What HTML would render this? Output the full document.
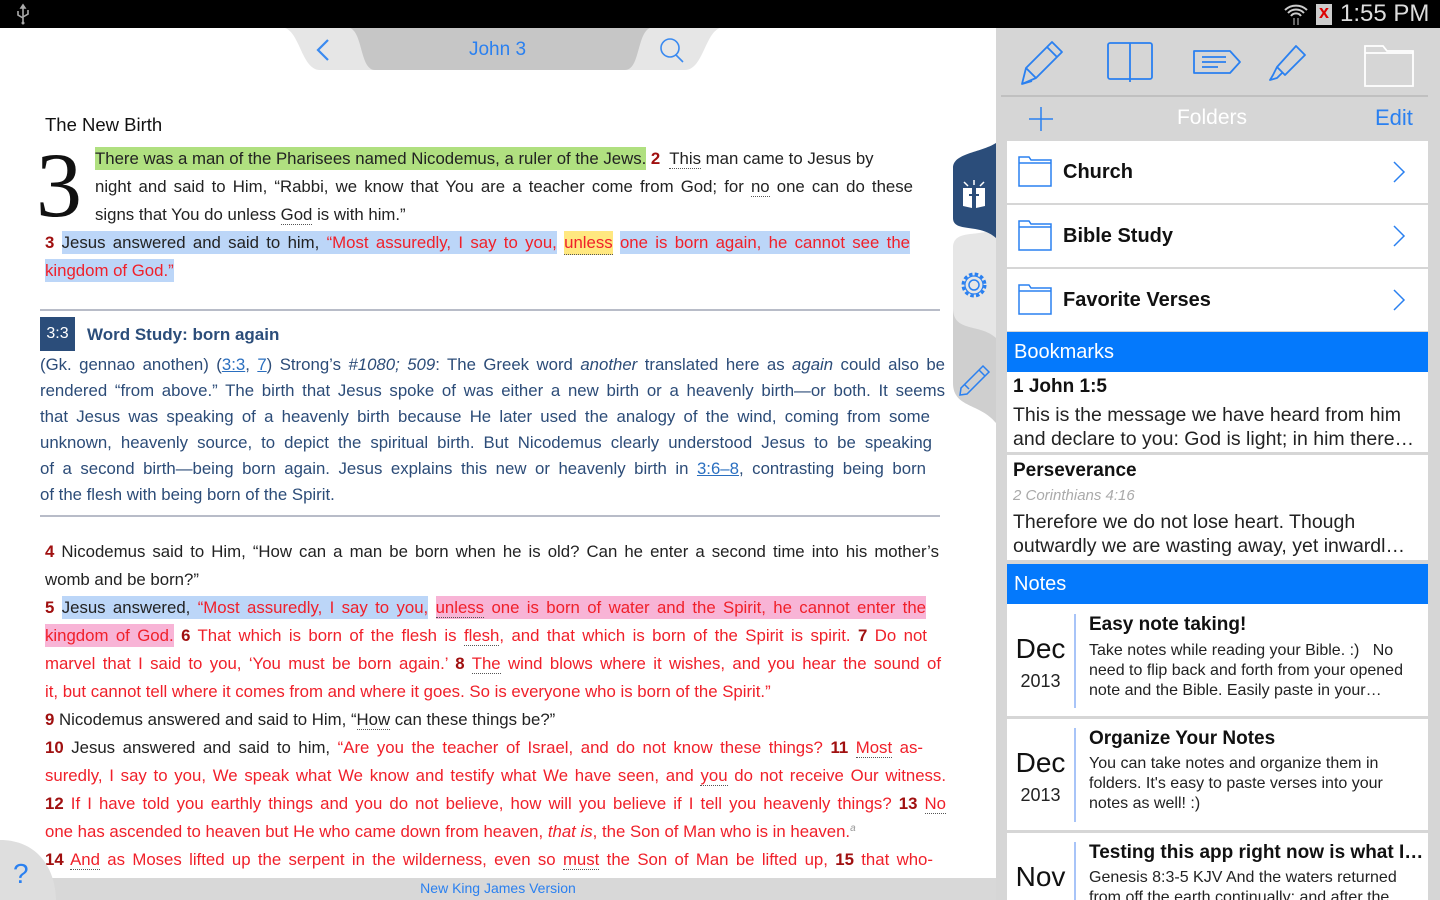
<!DOCTYPE html>
<html style="overflow:hidden"><head><meta charset="utf-8">
<style>
*{margin:0;padding:0;box-sizing:border-box}
html,body{width:1440px;height:900px;overflow:hidden}
body{background:#fff;font-family:"Liberation Sans",sans-serif;position:relative}
.a{position:absolute}
.l{position:absolute;white-space:nowrap;font-size:16.8px;line-height:20px;color:#222}
.j{text-align:justify;text-align-last:justify}
.r{color:#f0202a}
.n{color:#a01010;font-weight:bold}
.hg{background:#b0e080;padding:2px 0}
.hb{background:#bcd6f8;padding:2px 0}
.hy{background:#ffe880;padding:2px 0}
.hp{background:#f8b4d6;padding:2px 0}
.u{border-bottom:1px dotted #555}
.s{color:#2c4c78;font-size:16.8px}
.lk{color:#2a6fc0;text-decoration:underline}
.row{position:absolute;left:1007px;width:421px;background:#fff}
</style></head><body>
<!-- status bar -->
<div class="a" style="left:0;top:0;width:1440px;height:28px;background:#000"></div>
<svg class="a" style="left:12px;top:3px" width="22" height="22" viewBox="0 0 22 22"><path d="M11 2v18M11 2l-2 3h4zM6 8v4l5 3M16 7v4l-5 3" stroke="#aaa" stroke-width="1.6" fill="none"/><circle cx="11" cy="20" r="1.5" fill="#aaa"/></svg>
<svg class="a" style="left:1283px;top:2px" width="26" height="24" viewBox="0 0 26 24"><path d="M2 8a16 16 0 0 1 22 0M5 11a11 11 0 0 1 16 0M8 14a6 6 0 0 1 10 0" stroke="#ccc" stroke-width="2" fill="none"/><path d="M11 16v7M15 16v7" stroke="#888" stroke-width="1.5"/></svg>
<div class="a" style="left:1316px;top:4px;width:16px;height:21px;background:#ccc"></div>
<div class="a" style="left:1316px;top:2px;color:#d00;font-size:18px;font-weight:bold;width:16px;text-align:center">x</div>
<div class="a" style="left:1340px;top:0;color:#ddd;font-size:24px;line-height:28px">1:55 PM</div>

<!-- header tab -->
<svg class="a" style="left:285px;top:28px" width="435" height="44" viewBox="0 0 435 44"><path d="M0 0H435C420 5 418 42 400 42H35C17 42 15 5 0 0Z" fill="#e6e6e6"/><path d="M65 0H365C352 5 355 42 340 42H90C75 42 78 5 65 0Z" fill="#c6c6c6"/><path d="M43 12L33 22L43 32" stroke="#3a8af0" stroke-width="2.2" fill="none"/><circle cx="385" cy="20" r="9" stroke="#3a8af0" stroke-width="1.6" fill="none"/><path d="M391 27l7 7" stroke="#3a8af0" stroke-width="1.6"/></svg>
<div class="a" style="left:430px;top:39px;width:135px;text-align:center;color:#2a80f0;font-size:19px">John 3</div>

<!-- text -->
<div class="a" style="left:45px;top:114px;font-size:18.5px;color:#111">The New Birth</div>
<div class="a" style="left:36px;top:130px;font-family:'Liberation Serif',serif;font-size:92px;line-height:110px;color:#111">3</div>
<div class="l" style="left:95px;top:149px;width:830px"><span class="hg">There was a man of the Pharisees named Nicodemus, a ruler of the Jews.</span> <span class="n">2</span>&nbsp; <span class="u">This</span> man came to Jesus by</div>
<div class="l j" style="left:95px;top:177px;width:818px">night and said to Him, “Rabbi, we know that You are a teacher come from God; for <span class="u">no</span> one can do these</div>
<div class="l" style="left:95px;top:205px">signs that You do unless <span class="u">God</span> is with him.”</div>
<div class="l j" style="left:45px;top:233px;width:865px"><span class="n">3</span> <span class="hb">Jesus answered and said to him, <span class="r">“Most assuredly, I say to you,</span></span> <span class="hy r u">unless</span> <span class="hb r">one is born again, he cannot see the</span></div>
<div class="l r" style="left:45px;top:261px"><span class="hb">kingdom of God.”</span></div>

<div class="a" style="left:40px;top:309px;width:900px;height:2px;background:#b8bcc8"></div>
<div class="a" style="left:40px;top:317px;width:35px;height:34px;background:#2b4d7a;color:#fff;font-size:16px;line-height:34px;text-align:center">3:3</div>
<div class="a" style="left:87px;top:325px;font-size:17px;font-weight:bold;color:#2b4d7a">Word Study: born again</div>
<div class="l j s" style="left:40px;top:355px;width:905px">(Gk. gennao anothen) (<span class="lk">3:3</span>, <span class="lk">7</span>) Strong’s <i>#1080; 509</i>: The Greek word <i>another</i> translated here as <i>again</i> could also be</div>
<div class="l j s" style="left:40px;top:381px;width:905px">rendered “from above.” The birth that Jesus spoke of was either a new birth or a heavenly birth—or both. It seems</div>
<div class="l j s" style="left:40px;top:407px;width:890px">that Jesus was speaking of a heavenly birth because He later used the analogy of the wind, coming from some</div>
<div class="l j s" style="left:40px;top:433px;width:892px">unknown, heavenly source, to depict the spiritual birth. But Nicodemus clearly understood Jesus to be speaking</div>
<div class="l j s" style="left:40px;top:459px;width:886px">of a second birth—being born again. Jesus explains this new or heavenly birth in <span class="lk">3:6–8</span>, contrasting being born</div>
<div class="l s" style="left:40px;top:485px">of the flesh with being born of the Spirit.</div>
<div class="a" style="left:40px;top:515px;width:900px;height:2px;background:#b8bcc8"></div>

<div class="l j" style="left:45px;top:542px;width:894px"><span class="n">4</span> Nicodemus said to Him, “How can a man be born when he is old? Can he enter a second time into his mother’s</div>
<div class="l" style="left:45px;top:570px">womb and be born?”</div>
<div class="l j" style="left:45px;top:598px;width:881px"><span class="n">5</span> <span class="hb">Jesus answered, <span class="r">“Most assuredly, I say to you,</span></span> <span class="hp r"><span class="u">unless</span> one is born of water and the Spirit, he cannot enter the</span></div>
<div class="l j r" style="left:45px;top:626px;width:882px"><span class="hp">kingdom of God.</span> <span class="n">6</span> That which is born of the flesh is <span class="u">flesh</span>, and that which is born of the Spirit is spirit. <span class="n">7</span> Do not</div>
<div class="l j r" style="left:45px;top:654px;width:896px">marvel that I said to you, ‘You must be born again.’ <span class="n">8</span> <span class="u">The</span> wind blows where it wishes, and you hear the sound of</div>
<div class="l r" style="left:45px;top:682px">it, but cannot tell where it comes from and where it goes. So is everyone who is born of the Spirit.”</div>
<div class="l" style="left:45px;top:710px"><span class="n">9</span> Nicodemus answered and said to Him, “<span class="u">How</span> can these things be?”</div>
<div class="l j" style="left:45px;top:738px;width:878px"><span class="n">10</span> Jesus answered and said to him, <span class="r">“Are you the teacher of Israel, and do not know these things?</span> <span class="n">11</span> <span class="r"><span class="u">Most</span> as-</span></div>
<div class="l j r" style="left:45px;top:766px;width:901px">suredly, I say to you, We speak what We know and testify what We have seen, and <span class="u">you</span> do not receive Our witness.</div>
<div class="l j r" style="left:45px;top:794px;width:901px"><span class="n">12</span> If I have told you earthly things and you do not believe, how will you believe if I tell you heavenly things? <span class="n">13</span> <span class="u">No</span></div>
<div class="l r" style="left:45px;top:822px">one has ascended to heaven but He who came down from heaven, <i>that is</i>, the Son of Man who is in heaven.<span style="color:#999;font-size:10px;position:relative;top:-6px"><i>a</i></span></div>
<div class="l j r" style="left:45px;top:850px;width:888px"><span class="n">14</span> <span class="u">And</span> as Moses lifted up the serpent in the wilderness, even so <span class="u">must</span> the Son of Man be lifted up, <span class="n">15</span> that who-</div>

<div class="a" style="left:0;top:878px;width:996px;height:22px;background:#d8d8d8"></div>
<div class="a" style="left:0;top:880px;width:996px;text-align:center;color:#2a80f0;font-size:14px">New King James Version</div>
<svg class="a" style="left:0;top:840px" width="60" height="60"><path d="M0 0C35 0 55 25 56 60H0Z" fill="#dedede"/></svg>
<div class="a" style="left:13px;top:858px;color:#2a80f0;font-size:28px">?</div>

<!-- side tabs -->
<svg class="a" style="left:950px;top:138px" width="48" height="300" viewBox="0 0 48 300"><path d="M46 100C30 110 5 100 3 125V245C3 270 30 265 46 285Z" fill="#cfcfcf"/><path d="M46 0V200C30 185 3 195 3 170V110C3 90 30 100 46 90Z" fill="#e6e6e6"/><path d="M46 5V100C30 85 3 95 3 80V30C3 15 30 15 46 5Z" fill="#2b4d7a"/>
<g fill="#fff"><path d="M13 50h9v20l-9-2zM26 50h9v18l-9 2z"/></g><path d="M24 52v18M19 57h10" stroke="#2b4d7a" stroke-width="2"/>
<path d="M14 44l4 4M34 44l-4 4M24 42v5" stroke="#fff" stroke-width="1.5"/>
<circle cx="24" cy="147" r="5" stroke="#2a80f0" stroke-width="1.5" fill="none"/><circle cx="24" cy="147" r="11" stroke="#2a80f0" stroke-width="3" stroke-dasharray="3.5 2.3" fill="none"/><circle cx="24" cy="147" r="9" stroke="#2a80f0" stroke-width="1.2" fill="none"/>
<path d="M11 250l22-22 6 6-22 22-7 1zM29 232l6 6M14 246l5 5" stroke="#2a80f0" stroke-width="1.5" fill="none"/></svg>

<!-- right panel -->
<div class="a" style="left:996px;top:28px;width:444px;height:872px;background:#d6d6d6"></div>
<svg class="a" style="left:1000px;top:36px" width="440" height="56" viewBox="0 0 440 56"><g stroke="#2a80f0" stroke-width="1.8" fill="none" stroke-linejoin="round">
<path d="M22 48l4-16 26-26 10 10-26 26zM47 11l10 10M26 32l10 10M22 48l10-3"/>
<rect x="108" y="7" width="44" height="36" rx="2"/><path d="M130 7v39"/>
<path d="M194 15h36l10 11-10 11h-36zM202 21h24M202 26h24M202 31h16"/>
<path d="M296 10l9 9-20 20-8-8zM277 31l-4 8-3 5 7-2 6-6"/></g>
<path d="M365 10h18l4 5h26v35h-48z M365 17h48" stroke="#fff" stroke-width="1.8" fill="none"/></svg>
<div class="a" style="left:1001px;top:95px;width:427px;height:2px;background:#c0c0c0"></div>
<svg class="a" style="left:1028px;top:106px" width="26" height="26"><path d="M13 1v24M1 13h24" stroke="#2a80f0" stroke-width="1.5"/></svg>
<div class="a" style="left:1100px;top:106px;width:224px;text-align:center;color:#fff;font-size:21px">Folders</div>
<div class="a" style="left:1375px;top:105px;color:#2a80f0;font-size:22px">Edit</div>

<div class="row" style="top:141px;height:62px"></div>
<div class="row" style="top:205px;height:62px"></div>
<div class="row" style="top:269px;height:62px"></div>
<svg class="a" style="left:1015px;top:141px" width="400" height="190"><g stroke="#2a80f0" stroke-width="1.5" fill="none">
<path d="M4 16h10l2 3h20v26h-32z M4 22h32"/><path d="M4 80h10l2 3h20v26h-32z M4 86h32"/><path d="M4 144h10l2 3h20v26h-32z M4 150h32"/>
<path d="M379 21l10 10-10 10M379 85l10 10-10 10M379 149l10 10-10 10"/></g></svg>
<div class="a" style="left:1063px;top:161px;font-size:20px;font-weight:bold;color:#111">Church</div>
<div class="a" style="left:1063px;top:225px;font-size:20px;font-weight:bold;color:#111">Bible Study</div>
<div class="a" style="left:1063px;top:289px;font-size:20px;font-weight:bold;color:#111">Favorite Verses</div>

<div class="a" style="left:1007px;top:332px;width:421px;height:40px;background:#0479fc;color:#fff;font-size:20px;line-height:40px;padding-left:7px">Bookmarks</div>
<div class="row" style="top:372px;height:80px"></div>
<div class="a" style="left:1013px;top:376px;font-size:19px;font-weight:bold;color:#111">1 John 1:5</div>
<div class="a" style="left:1013px;top:403px;font-size:19.5px;color:#222;line-height:24px;white-space:nowrap">This is the message we have heard from him<br>and declare to you: God is light; in him there…</div>
<div class="row" style="top:455px;height:105px"></div>
<div class="a" style="left:1013px;top:460px;font-size:19px;font-weight:bold;color:#111">Perseverance</div>
<div class="a" style="left:1013px;top:487px;font-size:15px;font-style:italic;color:#aaa">2 Corinthians 4:16</div>
<div class="a" style="left:1013px;top:510px;font-size:19.5px;color:#222;line-height:24px;white-space:nowrap">Therefore we do not lose heart. Though<br>outwardly we are wasting away, yet inwardl…</div>

<div class="a" style="left:1007px;top:564px;width:421px;height:40px;background:#0479fc;color:#fff;font-size:20px;line-height:40px;padding-left:7px">Notes</div>
<div class="row" style="top:604px;height:112px"></div>
<div class="row" style="top:719px;height:111px"></div>
<div class="row" style="top:833px;height:67px"></div>
<div class="a" style="left:1074px;top:614px;width:2px;height:94px;background:#a8c4f8"></div>
<div class="a" style="left:1074px;top:728px;width:2px;height:94px;background:#a8c4f8"></div>
<div class="a" style="left:1074px;top:842px;width:2px;height:58px;background:#a8c4f8"></div>
<div class="a" style="left:1007px;top:633px;width:67px;text-align:center;font-size:28px;color:#111">Dec</div>
<div class="a" style="left:1007px;top:671px;width:67px;text-align:center;font-size:18px;color:#222">2013</div>
<div class="a" style="left:1007px;top:747px;width:67px;text-align:center;font-size:28px;color:#111">Dec</div>
<div class="a" style="left:1007px;top:785px;width:67px;text-align:center;font-size:18px;color:#222">2013</div>
<div class="a" style="left:1007px;top:861px;width:67px;text-align:center;font-size:28px;color:#111">Nov</div>
<div class="a" style="left:1089px;top:614px;font-size:19px;font-weight:bold;color:#111;white-space:nowrap">Easy note taking!</div>
<div class="a" style="left:1089px;top:641px;font-size:16px;line-height:20px;color:#222;white-space:nowrap">Take notes while reading your Bible. :)&nbsp;&nbsp; No<br>need to flip back and forth from your opened<br>note and the Bible. Easily paste in your…</div>
<div class="a" style="left:1089px;top:728px;font-size:19px;font-weight:bold;color:#111;white-space:nowrap">Organize Your Notes</div>
<div class="a" style="left:1089px;top:754px;font-size:16px;line-height:20px;color:#222;white-space:nowrap">You can take notes and organize them in<br>folders. It's easy to paste verses into your<br>notes as well! :)</div>
<div class="a" style="left:1089px;top:842px;font-size:19px;font-weight:bold;color:#111;white-space:nowrap">Testing this app right now is what I…</div>
<div class="a" style="left:1089px;top:868px;font-size:16px;line-height:20px;color:#222;white-space:nowrap">Genesis 8:3-5 KJV And the waters returned<br>from off the earth continually: and after the</div>
</body></html>
